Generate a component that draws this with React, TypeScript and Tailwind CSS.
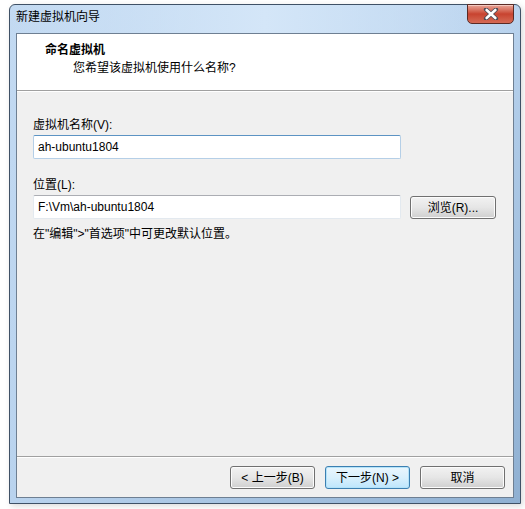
import React from "react";

const font = {
  fontFamily: '"Segoe UI", "Liberation Sans", "Noto Sans CJK SC", sans-serif',
};

function Btn({
  children,
  primary,
  className = "",
}: {
  children: React.ReactNode;
  primary?: boolean;
  className?: string;
}) {
  return (
    <div
      className={
        "h-[23px] rounded-[3px] border flex items-center justify-center text-[12px] leading-[16px] text-black " +
        (primary
          ? "border-[#3c7fb1] bg-gradient-to-b from-[#eaf6fd] via-[#d9f0fc] to-[#bee6fd] shadow-[inset_0_0_0_1px_#b4e3f9]"
          : "border-[#707070] bg-gradient-to-b from-[#f2f2f2] via-[#e6e6e6] to-[#cfcfcf] shadow-[inset_0_0_0_1px_#fcfcfc]") +
        " " +
        className
      }
    >
      {children}
    </div>
  );
}

export default function App() {
  return (
    <div className="w-[525px] h-[509px] bg-white pt-[4px] pl-[9px]" style={font}>
      <div className="w-[512px] h-[500px] rounded-t-[6px] border border-[#3f5166] bg-gradient-to-br from-[#c3daf2] via-[#b9d3ee] to-[#8fb0d2] flex flex-col px-[6px] pb-[5px] shadow-[2px_2px_6px_rgba(0,0,0,0.15)]">
        {/* title bar */}
        <div className="h-[28px] flex items-start justify-between bg-gradient-to-r from-transparent via-[#d4e6f8] to-transparent -mx-[6px] px-[6px]">
          <div className="pt-[4px] text-[12px] leading-[16px] text-black">新建虚拟机向导</div>
          <div className="w-[47px] h-[20px] -mt-[1px] rounded-b-[5px] border border-[#5a2a24] bg-gradient-to-b from-[#e8a598] via-[#c8432f] to-[#d56a55] flex items-center justify-center shadow-[inset_0_1px_0_#f3c7bd]">
            <svg width="16" height="12" viewBox="0 0 16 12">
              <path
                d="M3 1.5 L13 10.5 M13 1.5 L3 10.5"
                stroke="#4b4b55"
                strokeWidth="4.2"
                strokeLinecap="round"
                fill="none"
              />
              <path
                d="M3.6 2 L12.4 10 M12.4 2 L3.6 10"
                stroke="#ffffff"
                strokeWidth="2.6"
                strokeLinecap="round"
                fill="none"
              />
            </svg>
          </div>
        </div>
        {/* client */}
        <div className="flex-1 border border-[#6e7f92] bg-[#f0f0f0] flex flex-col">
          <div className="h-[56px] bg-white pl-[28px] pt-[8px]">
            <div className="text-[12px] leading-[16px] font-bold text-black">命名虚拟机</div>
            <div className="mt-[2px] pl-[28px] text-[12px] leading-[16px] text-black">
              您希望该虚拟机使用什么名称?
            </div>
          </div>
          <div className="h-px bg-[#a0a0a0]" />
          <div className="h-px bg-white" />
          <div className="flex-1 pl-[16px] pt-[25px]">
            <div className="text-[12px] leading-[16px] text-black">虚拟机名称(V):</div>
            <div className="mt-[2px] w-[368px] h-[24px] border border-[#b5cfe7] border-t-[#5c93c3] bg-white rounded-[2px] flex items-center pl-[4px] text-[12px] text-black">
              ah-ubuntu1804
            </div>
            <div className="mt-[18px] text-[12px] leading-[16px] text-black">位置(L):</div>
            <div className="mt-[2px] flex items-start gap-[9px]">
              <div className="w-[368px] h-[24px] border border-[#e3e9ef] border-t-[#abadb3] bg-white rounded-[2px] flex items-center pl-[4px] text-[12px] text-black">
                F:\Vm\ah-ubuntu1804
              </div>
              <Btn className="w-[86px] mt-[1px]">浏览(R)...</Btn>
            </div>
            <div className="mt-[7px] text-[12px] leading-[16px] text-black">
              在"编辑"&gt;"首选项"中可更改默认位置。
            </div>
          </div>
          <div className="h-px bg-[#a0a0a0]" />
          <div className="h-px bg-white" />
          <div className="h-[39px] flex justify-end items-start pt-[8px] pr-[8px] gap-[10px]">
            <Btn className="w-[85px]">&lt; 上一步(B)</Btn>
            <Btn primary className="w-[85px]">下一步(N) &gt;</Btn>
            <Btn className="w-[85px]">取消</Btn>
          </div>
        </div>
      </div>
    </div>
  );
}
